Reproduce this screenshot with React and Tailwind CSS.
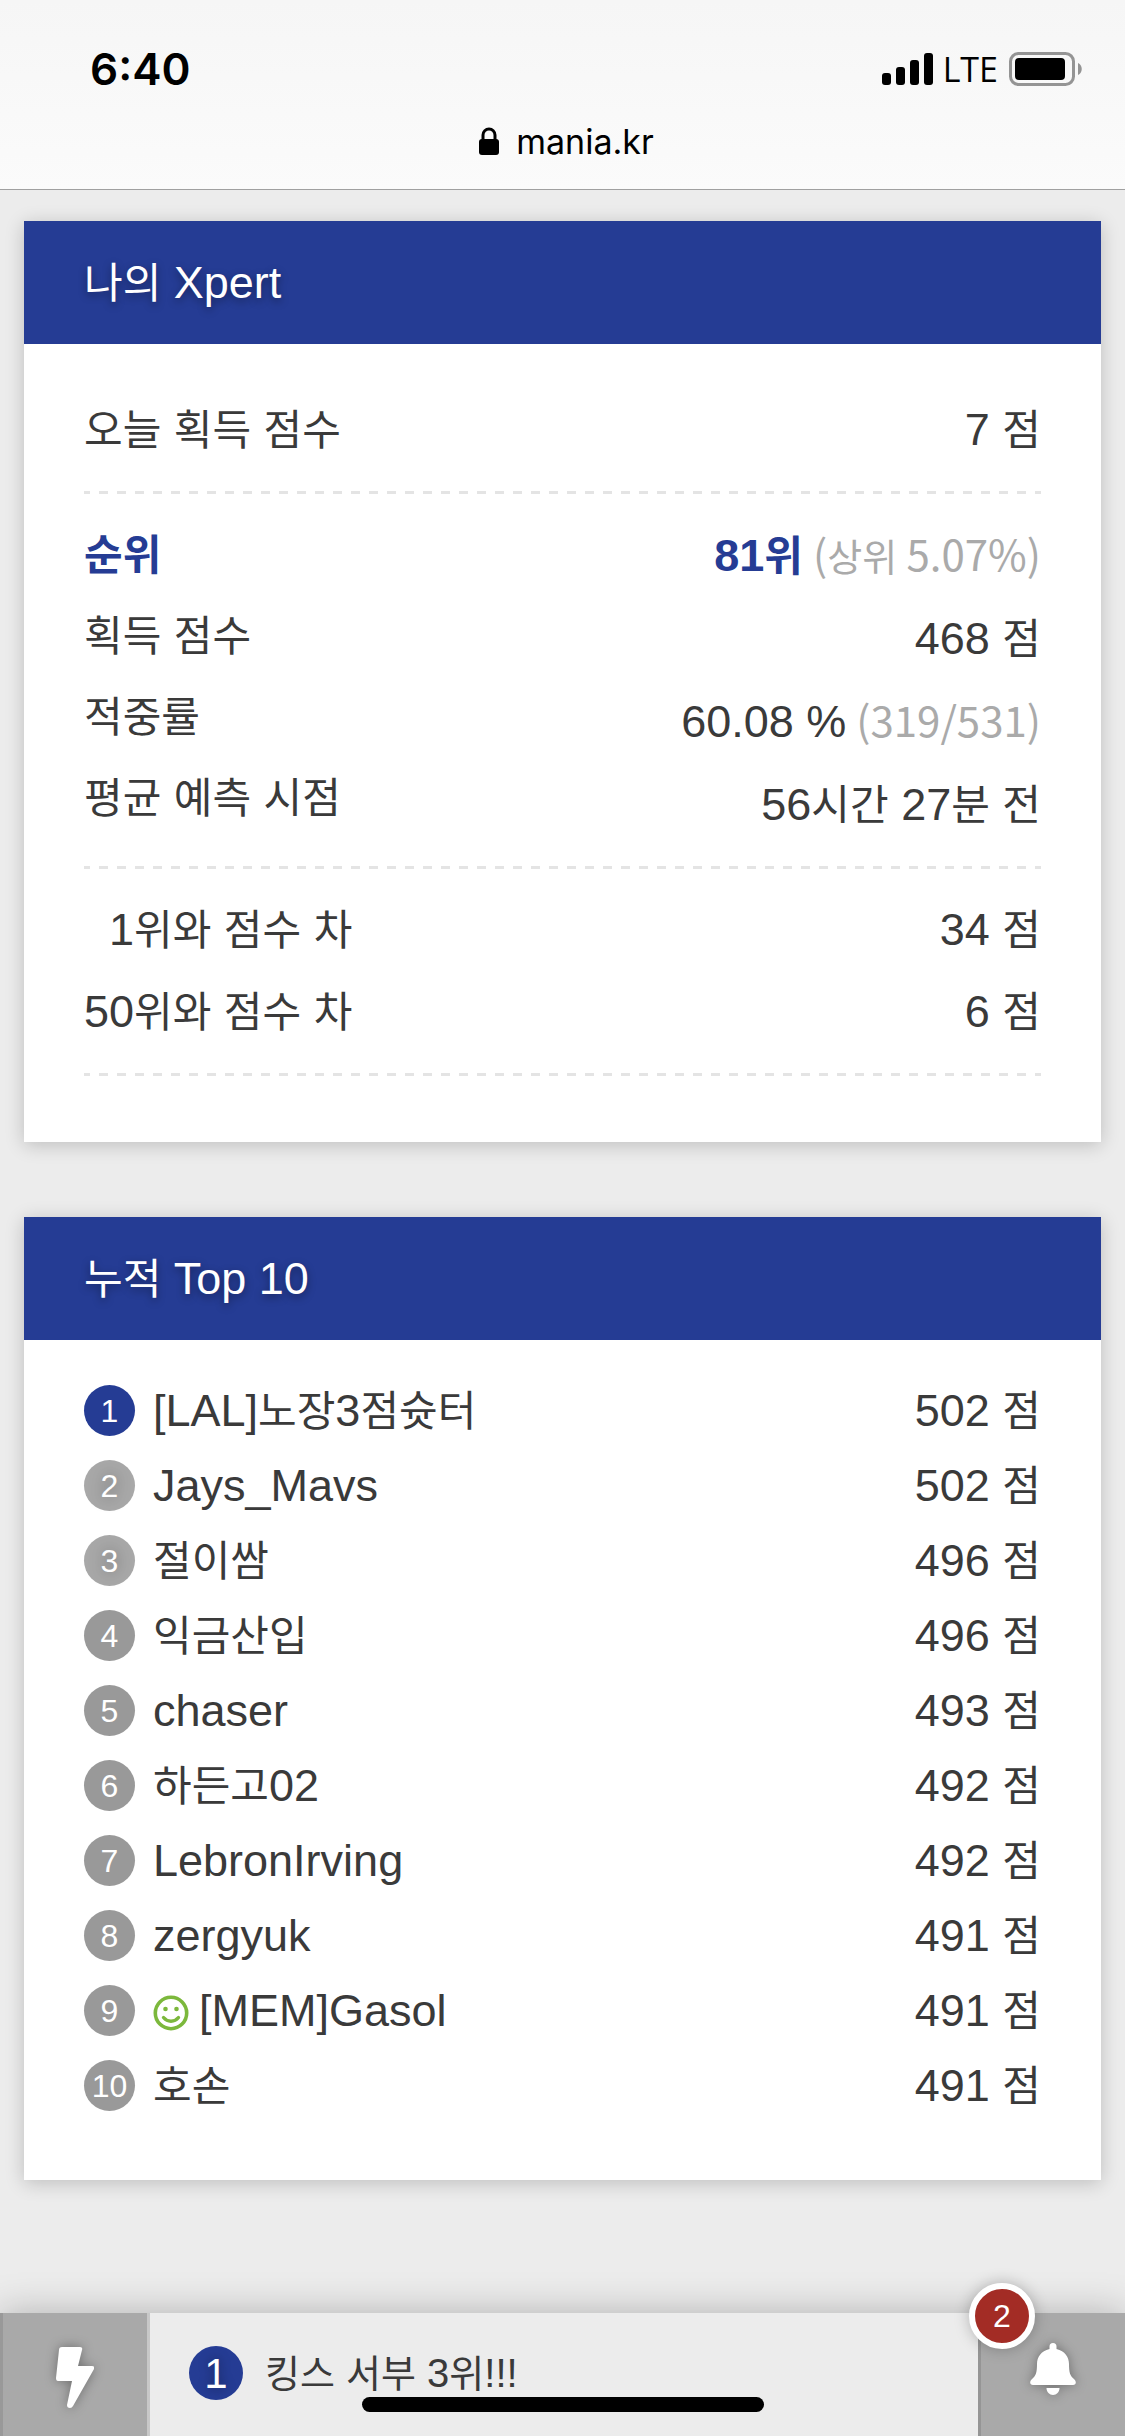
const BASE_FONT = "font-['Liberation_Sans','Noto_Sans_CJK_KR',sans-serif]";

const groups = [
    [{label: "오늘 획득 점수", value: "7 점"}],
    [
        {label: "순위", value: "81위", note: "(상위 5.07%)", strong: true},
        {label: "획득 점수", value: "468 점"},
        {label: "적중률", value: "60.08 %", note: "(319/531)"},
        {label: "평균 예측 시점", value: "56시간 27분 전"},
    ],
    [
        {label: "1위와 점수 차", value: "34 점", indent: true},
        {label: "50위와 점수 차", value: "6 점"},
    ],
];

const ranking = [
    {name: "[LAL]노장3점슛터", score: 502},
    {name: "Jays_Mavs", score: 502},
    {name: "절이쌈", score: 496},
    {name: "익금산입", score: 496},
    {name: "chaser", score: 493},
    {name: "하든고02", score: 492},
    {name: "LebronIrving", score: 492},
    {name: "zergyuk", score: 491},
    {name: "[MEM]Gasol", score: 491, online: true},
    {name: "호손", score: 491},
];

// Hangul runs are set a little smaller than the latin text next to them
function Mixed({children, size = "text-[42px]"}) {
    return children.split(/([가-힣]+)/).map((part, i) =>
        i % 2 ? <span key={i} className={`leading-none ${size}`}>{part}</span> : part
    );
}

function Note({children}) {
    return (
        <span className="ml-2.5 font-['Noto_Sans_CJK_KR',sans-serif] text-[42px] leading-none text-[#aaa]">
            <Mixed size="text-[38px]">{children}</Mixed>
        </span>
    );
}

function StatusBar() {
    return (
        <header className="h-[190px] border-b border-[#a0a0a0] bg-gradient-to-b from-[#f6f6f6] to-[#fbfbfb] font-[Inter,sans-serif] text-black">
            <div className="flex h-[114px] items-center justify-between pt-6 pr-[43px] pl-[90px]">
                <span className="text-[44px] font-semibold">6:40</span>
                <div className="flex items-center">
                    <svg width="51" height="32" viewBox="0 0 51 32">
                        <rect x="0" y="20" width="9" height="12" rx="3" />
                        <rect x="14" y="14" width="9" height="18" rx="3" />
                        <rect x="28" y="7" width="9" height="25" rx="3" />
                        <rect x="42" y="0" width="9" height="32" rx="3" />
                    </svg>
                    <span className="mr-[11px] ml-2.5 font-['Open_Sans',sans-serif] text-[34px] font-medium">LTE</span>
                    <svg width="73" height="34" viewBox="0 0 73 34">
                        <rect x="1.5" y="1.5" width="63" height="31" rx="8" fill="none" stroke="#949494" strokeWidth="3" />
                        <rect x="6" y="6" width="50" height="22" rx="4" />
                        <path d="M69 11c5 2 5 10 0 12z" fill="#949494" />
                    </svg>
                </div>
            </div>
            <div className="flex h-[54px] items-center justify-center gap-[17px] pl-2">
                <svg width="20" height="28" viewBox="0 0 20 28">
                    <rect x="0" y="12" width="20" height="16" rx="3" />
                    <path d="M4 14V8a6 6 0 0 1 12 0v6" fill="none" stroke="#000" strokeWidth="3" />
                </svg>
                <span className="text-[34px]">mania.kr</span>
            </div>
        </header>
    );
}

function Card({title, children}) {
    return (
        <section className="bg-white shadow-[0_3px_18px_rgba(0,0,0,0.2)]">
            <h2 className="h-[123px] bg-[#253c94] px-[60px] leading-[123px] text-white [text-shadow:0_3px_9px_rgba(0,0,0,0.4)]">
                <Mixed>{title}</Mixed>
            </h2>
            {children}
        </section>
    );
}

function StatGroup({rows}) {
    const long = rows.length > 2;

    return (
        <div>
            <div className="flex justify-between py-5">
                <ul className={long ? "leading-[81px]" : "leading-[82px]"}>
                    {rows.map((row) => (
                        <li key={row.label} className={row.strong ? "font-bold text-[#253c94]" : row.indent ? "text-right" : ""}>
                            <Mixed>{row.label}</Mixed>
                        </li>
                    ))}
                </ul>
                <ul className={long ? "text-right leading-[83px]" : "text-right leading-[82px]"}>
                    {rows.map((row) => (
                        <li key={row.label}>
                            <span className={row.strong ? "font-bold text-[#253c94]" : ""}>
                                <Mixed>{row.value}</Mixed>
                            </span>
                            {row.note && <Note>{row.note}</Note>}
                        </li>
                    ))}
                </ul>
            </div>
            <div className="h-[3px] bg-[repeating-linear-gradient(90deg,#e4e4e4_0_6px,transparent_6px_15px,#e4e4e4_15px_18px)]" />
        </div>
    );
}

function badgeColor(rank) {
    if (rank === 1) return "bg-[#253c94]";
    return rank < 4 ? "bg-[#a8a8a8] [text-shadow:0_0_15px_rgba(0,0,0,0.4)]" : "bg-[#999]";
}

function Smiley() {
    return (
        <svg className="mt-1 mr-2.5" width="36" height="36" viewBox="0 0 36 36">
            <circle cx="18" cy="18" r="15.700" fill="none" stroke="#7cb83c" strokeWidth="3.600" />
            <circle cx="12.500" cy="14" r="2.300" fill="#7cb83c" />
            <circle cx="23.500" cy="14" r="2.300" fill="#7cb83c" />
            <path d="M10.500 22.500c4 5 11 5 15 0" fill="none" stroke="#7cb83c" strokeWidth="3.400" strokeLinecap="round" />
        </svg>
    );
}

function BottomBar() {
    return (
        <footer className="sticky bottom-0 mt-auto flex h-[123px] bg-[#ececec] shadow-[0_0_36px_rgba(0,0,0,0.25)]">
            <button aria-label="실시간" className="flex w-[150px] justify-center border-r-3 border-l-3 border-r-[#c8c8c8] border-l-[#999] bg-[#a9a9a9] pt-[34px]">
                <svg className="drop-shadow-[0_0_6px_rgba(0,0,0,0.35)]" width="38" height="61" viewBox="0 0 38 61">
                    <path d="M6 0h18q3 0 2 3l-4 16h14q3 0 2 3L17 59q-1 2-3 2-3 0-3-3l5-24H2q-2 0-2-3L3 3q0-3 3-3z" fill="#fff" />
                </svg>
            </button>
            <a href="#hot" className="flex h-[120px] flex-1 items-center pl-[39px]">
                <span className="flex size-[54px] items-center justify-center rounded-full bg-[#253c94] text-[42px] text-white [text-shadow:0_0_12px_rgba(0,0,0,0.4)]">1</span>
                <span className="ml-[22px] text-[40px]"><Mixed size="text-[38px]">킹스 서부 3위!!!</Mixed></span>
            </a>
            <button aria-label="알림" className="relative flex w-[147px] justify-center border-l-3 border-[#959595] bg-[#a9a9a9] pt-[30px]">
                <svg className="drop-shadow-[0_0_6px_rgba(0,0,0,0.35)]" width="46" height="52" viewBox="0 0 46 52" fill="#fff">
                    <path d="M23 0a3.500 3.500 0 0 1 3.500 3.500V6C35 8 39 14 39 21c0 8 1 12 5 15 3 3 2 6-1 6H3c-3 0-4-3-1-6 4-3 5-7 5-15C7 14 11 8 19.500 6V3.500A3.500 3.500 0 0 1 23 0z" />
                    <path d="M16.500 45h13c0 4-3 7-6.500 7s-6.500-3-6.500-7z" />
                </svg>
                <span className="absolute -top-[30px] -left-3 flex size-[66px] items-center justify-center rounded-full border-6 border-white bg-[#a32c25] text-[32px] text-white shadow-[0_0_15px_rgba(0,0,0,0.25)]">2</span>
            </button>
            <div className="absolute bottom-6 left-1/2 h-[15px] w-[402px] -translate-x-1/2 rounded-full bg-black" />
        </footer>
    );
}

export default function App() {
    return (
        <div className={`flex min-h-screen flex-col bg-[#ececec] text-[45px] text-[#3a3a3a] ${BASE_FONT}`}>
            <StatusBar />
            <main className="flex flex-col gap-[75px] px-6 pt-[31px] pb-24">
                <Card title="나의 Xpert">
                    <div className="px-[60px] pt-[25px] pb-[66px]">
                        {groups.map((rows, i) => <StatGroup key={i} rows={rows} />)}
                    </div>
                </Card>
                <Card title="누적 Top 10">
                    <ol className="px-[60px] pt-[33px] pb-[57px]">
                        {ranking.map((user, i) => (
                            <li key={user.name} className="flex h-[75px] items-center leading-[77px]">
                                <span className={`mr-[18px] flex size-[51px] items-center justify-center rounded-full text-[32px] leading-none text-white ${badgeColor(i + 1)}`}>{i + 1}</span>
                                {user.online && <Smiley />}
                                <a href="#user"><Mixed>{user.name}</Mixed></a>
                                <span className="ml-auto"><Mixed>{`${user.score} 점`}</Mixed></span>
                            </li>
                        ))}
                    </ol>
                </Card>
            </main>
            <BottomBar />
        </div>
    );
}
